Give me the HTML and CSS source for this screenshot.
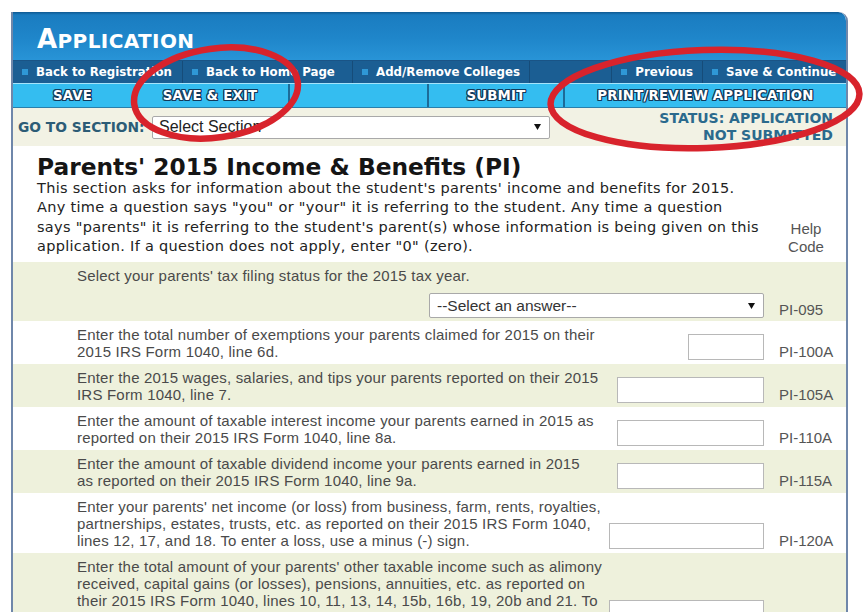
FILE: index.html
```html
<!DOCTYPE html>
<html lang="en">
<head>
<meta charset="utf-8">
<title>Application - Parents' 2015 Income &amp; Benefits</title>
<link rel="stylesheet" href="styles.css">
</head>
<body>
<div class="app">
  <header class="hdr">
    <div class="title"><span class="cap">A</span><span class="sc">PPLICATION</span></div>
  </header>
  <nav class="nav">
    <a class="nav-item w170"><i class="dot"></i>Back to Registration</a>
    <a class="nav-item w170"><i class="dot"></i>Back to Home Page</a>
    <a class="nav-item"><i class="dot"></i>Add/Remove Colleges</a>
    <span class="nav-spacer"></span>
    <a class="nav-item"><i class="dot"></i>Previous</a>
    <a class="nav-item last"><i class="dot"></i>Save &amp; Continue</a>
  </nav>
  <div class="btns">
    <div class="btn">SAVE</div>
    <div class="btn">SAVE &amp; EXIT</div>
    <div class="btn sep"></div>
    <div class="btn sep">SUBMIT</div>
    <div class="btn sep">PRINT/REVIEW APPLICATION</div>
  </div>
  <div class="secbar">
    <span class="goto">GO TO SECTION:</span>
    <div class="fsel sec"><span>Select Section</span><svg class="arrow" width="7" height="6" viewBox="0 0 7 6"><path d="M0 0H7L3.5 6Z"/></svg></div>
    <div class="status">STATUS: APPLICATION<br>NOT SUBMITTED</div>
  </div>
  <section class="intro">
    <div class="intro-text">
      <h1>Parents' 2015 Income &amp; Benefits (PI)</h1>
      <p>This section asks for information about the student's parents' income and benefits for 2015.<br>Any time a question says "you" or "your" it is referring to the student. Any time a question<br>says "parents" it is referring to the student's parent(s) whose information is being given on this<br>application. If a question does not apply, enter "0" (zero).</p>
    </div>
    <div class="help">Help<br>Code</div>
  </section>
  <div class="rows">
    <div class="row alt first">
      <div class="q wide">Select your parents' tax filing status for the 2015 tax year.</div>
      <div class="fsel ans-sel"><span>--Select an answer--</span><svg class="arrow" width="7" height="6" viewBox="0 0 7 6"><path d="M0 0H7L3.5 6Z"/></svg></div>
      <div class="code">PI-095</div>
    </div>
    <div class="row">
      <div class="q">Enter the total number of exemptions your parents claimed for 2015 on their<br>2015 IRS Form 1040, line 6d.</div>
      <div class="ans"><div class="inp w76"></div></div>
      <div class="code">PI-100A</div>
    </div>
    <div class="row alt">
      <div class="q">Enter the 2015 wages, salaries, and tips your parents reported on their 2015<br>IRS Form 1040, line 7.</div>
      <div class="ans"><div class="inp"></div></div>
      <div class="code">PI-105A</div>
    </div>
    <div class="row">
      <div class="q">Enter the amount of taxable interest income your parents earned in 2015 as<br>reported on their 2015 IRS Form 1040, line 8a.</div>
      <div class="ans"><div class="inp"></div></div>
      <div class="code">PI-110A</div>
    </div>
    <div class="row alt">
      <div class="q">Enter the amount of taxable dividend income your parents earned in 2015<br>as reported on their 2015 IRS Form 1040, line 9a.</div>
      <div class="ans"><div class="inp"></div></div>
      <div class="code">PI-115A</div>
    </div>
    <div class="row">
      <div class="q">Enter your parents' net income (or loss) from business, farm, rents, royalties,<br>partnerships, estates, trusts, etc. as reported on their 2015 IRS Form 1040,<br>lines 12, 17, and 18. To enter a loss, use a minus (-) sign.</div>
      <div class="ans"><div class="inp w155"></div></div>
      <div class="code">PI-120A</div>
    </div>
    <div class="row alt">
      <div class="q">Enter the total amount of your parents' other taxable income such as alimony<br>received, capital gains (or losses), pensions, annuities, etc. as reported on<br>their 2015 IRS Form 1040, lines 10, 11, 13, 14, 15b, 16b, 19, 20b and 21. To<br>enter a loss, use a minus (-) sign.</div>
      <div class="ans"><div class="inp w155"></div></div>
      <div class="code">PI-125A</div>
    </div>
  </div>
</div>
<svg class="marks" width="866" height="612" viewBox="0 0 866 612">
  <ellipse cx="216" cy="93" rx="82.5" ry="44.5" transform="rotate(-8 216 93)"/>
  <ellipse cx="705" cy="99" rx="154.5" ry="49" transform="rotate(-2 705 99)"/>
</svg>
</body>
</html>
```
FILE: styles.css
```css
html, body {
  margin: 0;
  padding: 0;
}
body {
  position: relative;
  width: 866px;
  height: 612px;
  overflow: hidden;
  background: #ffffff;
  font-family: "DejaVu Sans", Verdana, sans-serif;
}
.app {
  margin: 12px 0 0 11px;
  width: 833px;
  border-left: 2px solid #6f87aa;
  border-right: 2px solid #6f87aa;
  border-top-right-radius: 9px;
  overflow: hidden;
  background: #ffffff;
}
.hdr {
  height: 48px;
  box-sizing: border-box;
  padding: 14px 0 0 24px;
  background: linear-gradient(#0e5992 0, #1a7cc0 3px, #1f86ca 55%, #2894d7 100%);
  border-top-right-radius: 8px;
}
.title {
  font-family: "DejaVu Sans", Verdana, sans-serif;
  font-weight: bold;
  color: #ffffff;
  font-size: 26px;
  line-height: 26px;
  letter-spacing: 0.4px;
}
.title .sc {
  font-size: 20px;
}
.nav {
  display: flex;
  height: 23px;
  background: #1b5e93;
  border-top: 1px solid #1a5486;
  box-sizing: border-box;
  white-space: nowrap;
}
.nav-item {
  display: flex;
  align-items: center;
  padding: 0 9px;
  color: #ffffff;
  font-weight: bold;
  font-size: 11.8px;
  border-right: 1px solid #164c79;
  flex: none;
  box-sizing: border-box;
}
.nav-item.w170 {
  width: 170px;
}
.nav-item.last {
  width: 143px;
  overflow: hidden;
  border-right: 0;
  padding-right: 0;
}
.nav-spacer {
  flex: 1;
  border-right: 1px solid #164c79;
}
.dot {
  width: 6px;
  height: 6px;
  background: #2f98d6;
  margin-right: 8px;
  flex: none;
}
.btns {
  display: grid;
  grid-template-columns: 119px 156px 139px 136px 1fr;
  height: 25px;
  box-sizing: border-box;
  background: #34bdf0;
  border-top: 1px solid #a6e4fa;
  border-bottom: 1px solid #2a7fab;
}
.btn {
  display: flex;
  align-items: center;
  justify-content: center;
  font-family: "DejaVu Sans", Verdana, sans-serif;
  font-weight: bold;
  font-size: 13.3px;
  color: #ffffff;
  letter-spacing: 0.2px;
  text-shadow: -1px -1px 0 #12395a, 1px -1px 0 #12395a, -1px 1px 0 #12395a, 1px 1px 0 #12395a, 0 1px 0 #12395a, 0 -1px 0 #12395a, 1px 0 0 #12395a, -1px 0 0 #12395a;
}
.btn.sep {
  border-left: 2px solid #1d6b98;
}
.secbar {
  display: flex;
  align-items: center;
  height: 38px;
  box-sizing: border-box;
  padding: 0 13px 0 5px;
  background: #f2f2e4;
}
.goto {
  width: 129px;
  flex: none;
  white-space: nowrap;
  font-weight: bold;
  font-size: 13.8px;
  color: #2c5c76;
}
.fsel {
  display: flex;
  align-items: center;
  justify-content: space-between;
  box-sizing: border-box;
  background: #ffffff;
  border: 1px solid #a9a9a9;
  border-radius: 2px;
  font-family: "Liberation Sans", Arial, sans-serif;
  color: #222222;
}
.fsel.sec {
  margin-left: 5px;
  width: 398px;
  height: 23px;
  padding: 0 8px 0 6px;
  font-size: 16px;
}
.arrow {
  fill: #111111;
  flex: none;
}
.status {
  margin-left: auto;
  text-align: right;
  font-weight: bold;
  font-size: 14px;
  line-height: 17px;
  color: #2b6a8d;
  white-space: nowrap;
}
.intro {
  display: grid;
  grid-template-columns: 725px 1fr;
  padding: 9px 0 6px 24px;
}
.intro h1 {
  margin: 0;
  font-family: "DejaVu Sans", Verdana, sans-serif;
  font-weight: bold;
  font-size: 23.3px;
  line-height: 24px;
  color: #151515;
}
.intro p {
  margin: 0;
  font-size: 14.5px;
  letter-spacing: 0.3px;
  line-height: 19.3px;
  color: #222222;
  white-space: nowrap;
}
.help {
  align-self: end;
  text-align: center;
  padding-left: 4px;
  font-family: "Liberation Sans", Arial, sans-serif;
  font-size: 15px;
  line-height: 18px;
  color: #555555;
}
.row {
  display: grid;
  grid-template-columns: 64px 530px 1fr 82px;
  align-items: end;
  padding: 5px 0 4px;
  font-family: "Liberation Sans", Arial, sans-serif;
}
.row.alt {
  background: #eef1dc;
}
.row.first {
  padding-bottom: 3px;
}
.q {
  grid-column: 2;
  font-size: 15px;
  letter-spacing: 0.2px;
  line-height: 17px;
  color: #4a4a4a;
  white-space: nowrap;
}
.q.wide {
  grid-column: 2 / 4;
}
.ans {
  grid-column: 3;
  justify-self: end;
}
.ans-sel {
  grid-column: 2 / 4;
  justify-self: end;
  width: 335px;
  height: 25px;
  margin-top: 9px;
  padding: 0 8px 0 7px;
  font-size: 15.5px;
  color: #333333;
}
.code {
  grid-column: 4;
  padding-left: 15px;
  font-size: 15px;
  line-height: 17px;
  color: #555555;
  white-space: nowrap;
}
.inp {
  width: 147px;
  height: 26px;
  box-sizing: border-box;
  border: 1px solid #b8b8b8;
  background: #ffffff;
}
.inp.w76 {
  width: 76px;
}
.inp.w155 {
  width: 155px;
}
.marks {
  position: absolute;
  top: 0;
  left: 0;
  pointer-events: none;
  fill: none;
  stroke: #d8232c;
  stroke-width: 6.5;
}
```
